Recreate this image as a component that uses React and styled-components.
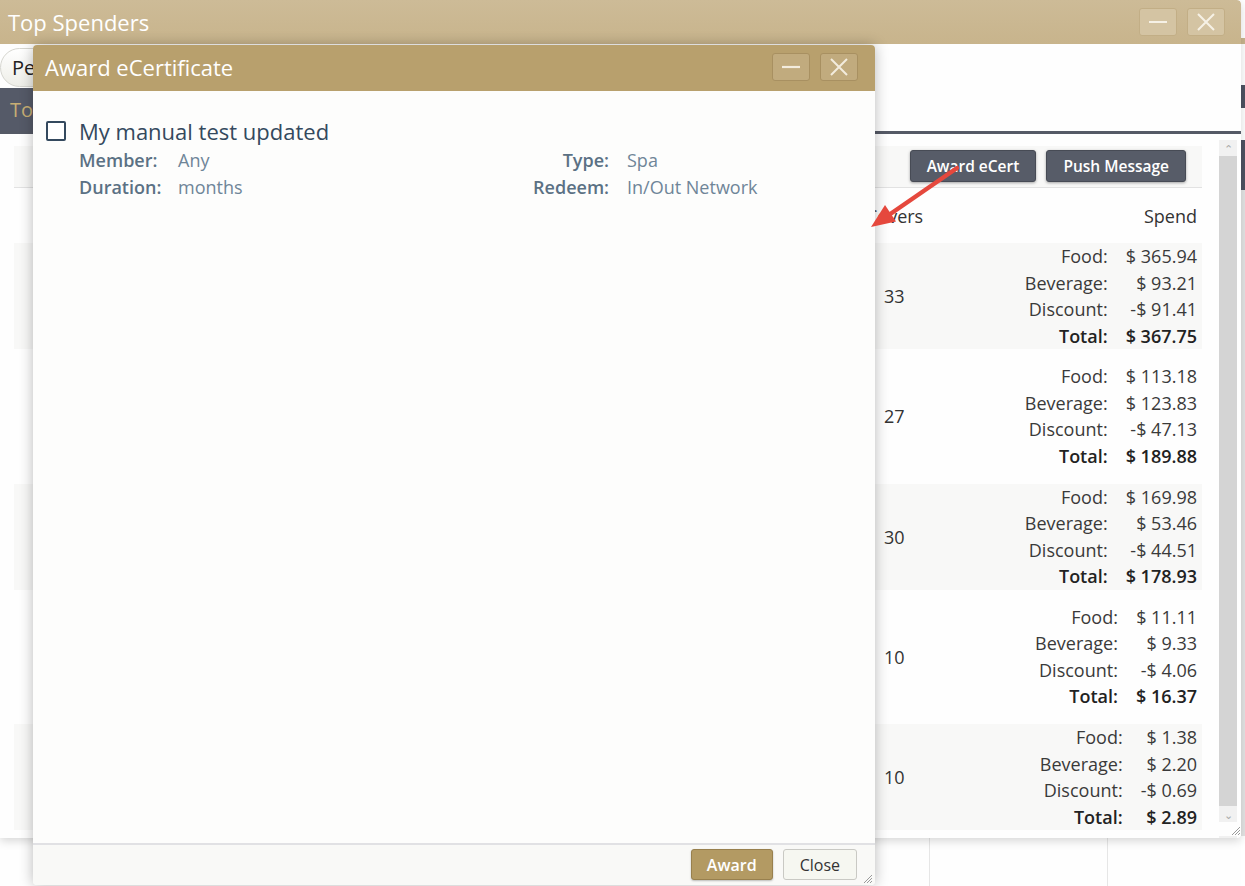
import React from "react";
import styled, { createGlobalStyle } from "styled-components";

const GlobalStyle = createGlobalStyle`
  html, body {
    margin: 0;
    padding: 0;
    background: #ffffff;
  }
  body {
    font-family: "Open Sans", "Liberation Sans", sans-serif;
    overflow: hidden;
  }
  * {
    box-sizing: border-box;
  }
`;

const spenders = [
  { covers: 33, food: "$ 365.94", beverage: "$ 93.21", discount: "-$ 91.41", total: "$ 367.75" },
  { covers: 27, food: "$ 113.18", beverage: "$ 123.83", discount: "-$ 47.13", total: "$ 189.88" },
  { covers: 30, food: "$ 169.98", beverage: "$ 53.46", discount: "-$ 44.51", total: "$ 178.93" },
  { covers: 10, food: "$ 11.11", beverage: "$ 9.33", discount: "-$ 4.06", total: "$ 16.37" },
  { covers: 10, food: "$ 1.38", beverage: "$ 2.20", discount: "-$ 0.69", total: "$ 2.89" },
];

function MinusIcon() {
  return (
    <svg width="20" height="20" viewBox="0 0 20 20">
      <path d="M1 10h18" stroke="currentColor" strokeWidth="2.2" />
    </svg>
  );
}

function CloseIcon() {
  return (
    <svg width="20" height="20" viewBox="0 0 20 20">
      <path d="M2 2l16 16M18 2L2 18" stroke="currentColor" strokeWidth="2" />
    </svg>
  );
}

function Grip() {
  return (
    <svg width="12" height="12" viewBox="0 0 12 12">
      <path d="M11 3L3 11M11 6L6 11M11 9L9 11" stroke="#9a9a9a" strokeWidth="1" />
    </svg>
  );
}

function App() {
  return (
    <>
      <GlobalStyle />
      <Desktop>
        <Stage>
          <Main>
            <Window>
              <TitleBar $tone="back">
                <Title>Top Spenders</Title>
                <Controls>
                  <CtlButton $tone="back">
                    <MinusIcon />
                  </CtlButton>
                  <CtlButton $tone="back">
                    <CloseIcon />
                  </CtlButton>
                </Controls>
              </TitleBar>
              <Toolbar>
                <Pill>Period</Pill>
              </Toolbar>
              <Tabs>
                <Tab>Top</Tab>
              </Tabs>
              <Body>
                <Panel>
                  <Actions>
                    <DarkButton>Award eCert</DarkButton>
                    <DarkButton>Push Message</DarkButton>
                  </Actions>
                  <HeadRow>
                    <span />
                    <CoversCell $head>Covers</CoversCell>
                    <SpendHead>Spend</SpendHead>
                  </HeadRow>
                  {spenders.map((s, i) => (
                    <Row key={i} $striped={i % 2 === 0}>
                      <span />
                      <CoversCell>{s.covers}</CoversCell>
                      <SpendGrid>
                        <Label>Food:</Label>
                        <Amount>{s.food}</Amount>
                        <Label>Beverage:</Label>
                        <Amount>{s.beverage}</Amount>
                        <Label>Discount:</Label>
                        <Amount>{s.discount}</Amount>
                        <Label $bold>Total:</Label>
                        <Amount $bold>{s.total}</Amount>
                      </SpendGrid>
                    </Row>
                  ))}
                </Panel>
                <Scrollbar>
                  <ScrollArrow>&#8963;</ScrollArrow>
                  <Thumb />
                  <ScrollArrow>&#8964;</ScrollArrow>
                  <GripSlot>
                    <Grip />
                  </GripSlot>
                </Scrollbar>
              </Body>
            </Window>
            <Underlay>
              <UnderCell />
              <UnderCell $lined />
              <UnderCell $lined />
            </Underlay>
          </Main>
          <EdgeStrip>
            <EdgeBlock $h={38} />
            <EdgeBlock $h={6} $color="#c9b58e" />
            <EdgeBlock $h={41} />
            <EdgeBlock $h={23} $color="#4d5261" />
            <EdgeBlock $h={32} />
            <EdgeBlock $h={50} $color="#4d5261" />
            <EdgeBlock $h={646} $color="#e4e4e4" />
          </EdgeStrip>
        </Stage>

        <Dialog>
          <TitleBar $tone="front">
            <Title $front>Award eCertificate</Title>
            <Controls>
              <CtlButton $tone="front">
                <MinusIcon />
              </CtlButton>
              <CtlButton $tone="front">
                <CloseIcon />
              </CtlButton>
            </Controls>
          </TitleBar>
          <DialogBody>
            <CertTitle>
              <Checkbox />
              <span>My manual test updated</span>
            </CertTitle>
            <Details>
              <DetailLabel>Member:</DetailLabel>
              <DetailValue>Any</DetailValue>
              <DetailLabel $right>Type:</DetailLabel>
              <DetailValue>Spa</DetailValue>
              <DetailLabel>Duration:</DetailLabel>
              <DetailValue>months</DetailValue>
              <DetailLabel $right>Redeem:</DetailLabel>
              <DetailValue>In/Out Network</DetailValue>
            </Details>
          </DialogBody>
          <Footer>
            <FooterButton $primary>Award</FooterButton>
            <FooterButton>Close</FooterButton>
          </Footer>
          <DialogGrip>
            <Grip />
          </DialogGrip>
        </Dialog>

        <Arrow width="110" height="75" viewBox="0 0 110 75">
          <path d="M97 8L31 53.5" stroke="#e5483d" strokeWidth="4.5" strokeLinecap="round" />
          <polygon points="11,67 36,61.5 25,45" fill="#e5483d" />
        </Arrow>
      </Desktop>
    </>
  );
}

const Desktop = styled.div`
  position: relative;
  width: 1245px;
  height: 886px;
  overflow: hidden;
  background: #ffffff;
`;

const Stage = styled.div`
  display: flex;
  height: 100%;
`;

const Main = styled.div`
  width: 1241px;
  display: flex;
  flex-direction: column;
`;

const Window = styled.section`
  height: 838px;
  display: flex;
  flex-direction: column;
  background: #fefefe;
  border-radius: 0 4px 4px 0;
  box-shadow: 0 3px 10px rgba(0, 0, 0, 0.16);
  position: relative;
  z-index: 1;
  overflow: hidden;
`;

const TitleBar = styled.header`
  height: ${(p) => (p.$tone === "front" ? "46px" : "44px")};
  flex-shrink: 0;
  display: flex;
  align-items: center;
  justify-content: space-between;
  padding: ${(p) => (p.$tone === "front" ? "0 17px 2px 12px" : "0 16px 0 8px")};
  background: ${(p) =>
    p.$tone === "front"
      ? "#b8a06d"
      : "linear-gradient(#cdbb97, #c8b48c)"};
  border-radius: ${(p) => (p.$tone === "front" ? "4px 4px 0 0" : "0 4px 0 0")};
`;

const Title = styled.h1`
  margin: 0;
  font-size: 22px;
  font-weight: 400;
  color: #ffffff;
  letter-spacing: 0;
`;

const Controls = styled.div`
  display: flex;
  gap: 10px;
`;

const CtlButton = styled.button`
  width: 38px;
  height: 28px;
  padding: 0;
  display: flex;
  align-items: center;
  justify-content: center;
  border-radius: 3px;
  border: 1px solid ${(p) => (p.$tone === "front" ? "#a89061" : "#c2ae86")};
  background: ${(p) => (p.$tone === "front" ? "#c1ab7e" : "#d4c4a3")};
  color: ${(p) => (p.$tone === "front" ? "#f3ecdd" : "#f6f1e6")};
`;

const Toolbar = styled.div`
  height: 44px;
  flex-shrink: 0;
  padding: 4px 0 0 0;
  display: flex;
  align-items: flex-start;
`;

const Pill = styled.div`
  height: 39px;
  display: flex;
  align-items: center;
  padding: 0 14px 0 11px;
  border-radius: 20px;
  border: 1px solid #d6d6d0;
  background: linear-gradient(#ffffff, #eeeee8);
  font-size: 20px;
  color: #222;
  white-space: nowrap;
`;

const Tabs = styled.nav`
  height: 46px;
  flex-shrink: 0;
  display: flex;
  border-bottom: 3px solid #555a66;
`;

const Tab = styled.div`
  display: flex;
  align-items: center;
  padding: 0 60px 0 10px;
  background: #555a68;
  color: #c7ae74;
  font-size: 20px;
`;

const Body = styled.div`
  flex: 1;
  min-height: 0;
  display: flex;
  padding: 4px 4px 0 14px;
  gap: 17px;
`;

const Panel = styled.div`
  flex: 1;
  min-width: 0;
  display: flex;
  flex-direction: column;
  padding-top: 8px;
  overflow: hidden;
`;

const Actions = styled.div`
  height: 42px;
  flex-shrink: 0;
  display: flex;
  align-items: center;
  justify-content: flex-end;
  gap: 10px;
  padding: 0 16px 1px 0;
  background: #f8f8f7;
  border-bottom: 1px solid #e2e2e2;
`;

const DarkButton = styled.button`
  height: 32px;
  padding: 0 16px;
  border-radius: 3px;
  border: 1px solid #474b55;
  background: #575c68;
  color: #ffffff;
  font-family: "Open Sans", "Liberation Sans", sans-serif;
  font-size: 15.5px;
  font-weight: 600;
  box-shadow: 0 1px 3px rgba(0, 0, 0, 0.35);
`;

const HeadRow = styled.div`
  height: 55px;
  flex-shrink: 0;
  display: grid;
  grid-template-columns: 1fr 60px 275px;
  align-items: center;
  padding-right: 5px;
  font-size: 18px;
  color: #333;
`;

const SpendHead = styled.div`
  text-align: right;
`;

const CoversCell = styled.div`
  text-align: left;
  padding-left: ${(p) => (p.$head ? "4px" : "22px")};
  white-space: nowrap;
  font-size: 18px;
  color: #333;
`;

const Row = styled.div`
  height: 106px;
  flex-shrink: 0;
  margin-bottom: 14.25px;
  display: grid;
  grid-template-columns: 1fr 60px 275px;
  align-items: center;
  padding-right: 5px;
  background: ${(p) => (p.$striped ? "#f8f8f7" : "transparent")};
`;

const SpendGrid = styled.div`
  justify-self: end;
  display: grid;
  grid-template-columns: auto auto;
  column-gap: 18px;
  font-size: 18px;
  line-height: 26.5px;
  color: #333;
`;

const Label = styled.span`
  text-align: right;
  font-weight: ${(p) => (p.$bold ? 600 : 400)};
  color: ${(p) => (p.$bold ? "#222" : "#3a3a3a")};
`;

const Amount = styled(Label)`
  white-space: nowrap;
`;

const Scrollbar = styled.div`
  width: 18px;
  flex-shrink: 0;
  display: flex;
  flex-direction: column;
  margin-top: 2px;
  background: #f1f1f1;
  position: relative;
`;

const ScrollArrow = styled.div`
  height: 16px;
  flex-shrink: 0;
  display: flex;
  align-items: center;
  justify-content: center;
  font-size: 11px;
  line-height: 1;
  color: #a9a9a9;
`;

const Thumb = styled.div`
  height: 650px;
  flex-shrink: 0;
  background: #d4d4d4;
`;

const GripSlot = styled.div`
  height: 14px;
  display: flex;
  justify-content: flex-end;
  align-items: flex-end;
  margin-right: -4px;
  background: #fefefe;
`;

const Underlay = styled.div`
  flex: 1;
  display: grid;
  grid-template-columns: 929px 178px 1fr;
  background: #fefefe;
`;

const UnderCell = styled.div`
  border-left: ${(p) => (p.$lined ? "1px solid #e6e6e6" : "none")};
`;

const EdgeStrip = styled.div`
  width: 4px;
  display: flex;
  flex-direction: column;
`;

const EdgeBlock = styled.div`
  height: ${(p) => p.$h}px;
  flex-shrink: 0;
  background: ${(p) => p.$color || "#ffffff"};
`;

const Dialog = styled.section`
  position: absolute;
  left: 33px;
  top: 45px;
  width: 842px;
  height: 840px;
  z-index: 5;
  display: flex;
  flex-direction: column;
  border-radius: 4px;
  background: #fdfdfc;
  box-shadow: 0 0 14px rgba(0, 0, 0, 0.28);
`;

const DialogBody = styled.div`
  flex: 1;
  padding: 24px 13px 0 13px;
`;

const CertTitle = styled.div`
  display: flex;
  align-items: center;
  gap: 13px;
  height: 31px;
  font-size: 22px;
  color: #34495e;
`;

const Checkbox = styled.span`
  width: 20px;
  height: 20px;
  flex-shrink: 0;
  border: 2.5px solid #34495e;
  border-radius: 2px;
  background: #ffffff;
`;

const Details = styled.div`
  display: grid;
  grid-template-columns: 99px 332px 117px auto;
  margin-top: 1px;
  padding-left: 33px;
  font-size: 18px;
  line-height: 27px;
`;

const DetailLabel = styled.span`
  font-weight: 600;
  color: #5b7184;
  text-align: ${(p) => (p.$right ? "right" : "left")};
  padding-right: ${(p) => (p.$right ? "18px" : "0")};
`;

const DetailValue = styled.span`
  color: #6f8598;
`;

const Footer = styled.footer`
  height: 42px;
  flex-shrink: 0;
  display: flex;
  align-items: center;
  justify-content: flex-end;
  gap: 10px;
  padding: 0 18px 1px 0;
  border-top: 2px solid #e1e1e4;
  background: #f9f9f7;
  border-radius: 0 0 4px 4px;
`;

const FooterButton = styled.button`
  height: 31px;
  padding: 0 ${(p) => (p.$primary ? "15px" : "16px")};
  border-radius: 3px;
  font-family: "Open Sans", "Liberation Sans", sans-serif;
  font-size: 16px;
  font-weight: ${(p) => (p.$primary ? 600 : 400)};
  color: ${(p) => (p.$primary ? "#ffffff" : "#333")};
  background: ${(p) => (p.$primary ? "#b39a63" : "#f6f7f1")};
  border: 1px solid ${(p) => (p.$primary ? "#98804e" : "#c9c9c4")};
  box-shadow: ${(p) => (p.$primary ? "0 1px 2px rgba(0,0,0,0.25)" : "none")};
`;

const DialogGrip = styled.div`
  position: absolute;
  right: 2px;
  bottom: 1px;
  display: flex;
`;

const Arrow = styled.svg`
  position: absolute;
  left: 860px;
  top: 160px;
  z-index: 10;
`;

export default App;
